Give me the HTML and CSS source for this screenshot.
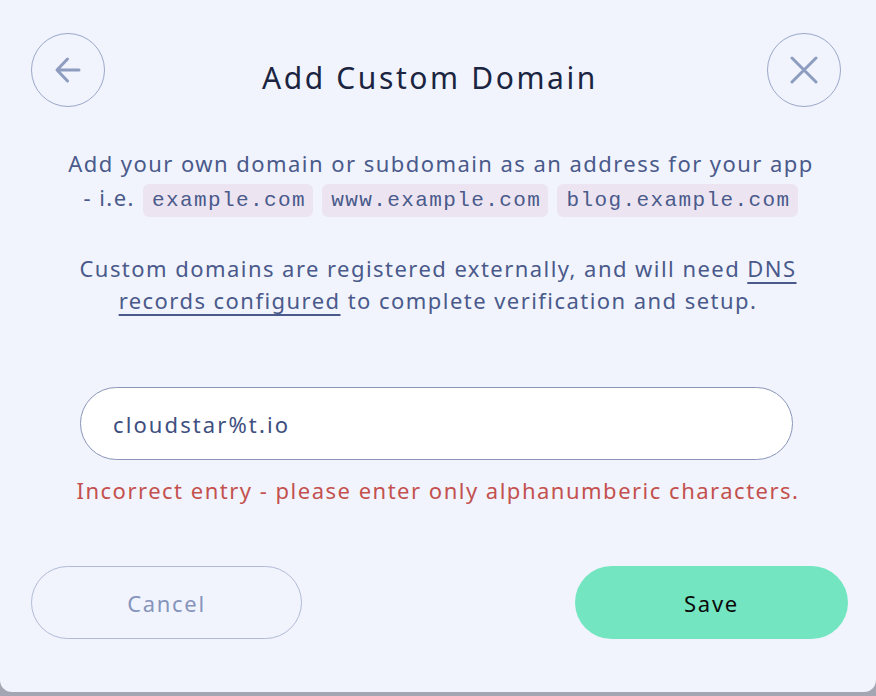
FILE: index.html
```html
<!DOCTYPE html>
<html lang="en">
<head>
<meta charset="utf-8">
<title>Add Custom Domain</title>
<link rel="stylesheet" href="styles.css">
</head>
<body>
<div class="dialog">
  <header class="header">
    <button class="circle-btn" aria-label="Back">
      <svg width="28" height="28" viewBox="0 0 28 28" fill="none" stroke="currentColor" stroke-width="3" stroke-linecap="round" stroke-linejoin="round"><path d="M25 14H3.5M13.5 3L3 14l10.5 11"/></svg>
    </button>
    <h1 class="title">Add Custom Domain</h1>
    <button class="circle-btn" aria-label="Close">
      <svg width="28" height="28" viewBox="0 0 28 28" fill="none" stroke="currentColor" stroke-width="3" stroke-linecap="round"><path d="M2 2l24 24M26 2L2 26"/></svg>
    </button>
  </header>
  <p class="intro">Add your own domain or subdomain as an address for your app<br>- i.e. <code class="chip">example.com</code> <code class="chip">www.example.com</code> <code class="chip">blog.example.com</code></p>
  <p class="note">Custom domains are registered externally, and will need <a href="#" class="link">DNS<br>records configured</a> to complete verification and setup.</p>
  <div class="field">
    <input class="input" type="text" value="cloudstar%t.io">
    <p class="error">Incorrect entry - please enter only alphanumberic characters.</p>
  </div>
  <div class="actions">
    <button class="btn btn-cancel">Cancel</button>
    <button class="btn btn-save">Save</button>
  </div>
</div>
</body>
</html>
```
FILE: styles.css
```css
* { box-sizing: border-box; }
html, body { margin: 0; padding: 0; }
body {
  background: #a4a7b3;
  font-family: "Noto Sans", "Open Sans", sans-serif;
  width: 876px;
  height: 696px;
  overflow: hidden;
}
.dialog {
  width: 876px;
  height: 692px;
  background: #f1f4fd;
  border-radius: 0 0 12px 12px;
  display: flex;
  flex-direction: column;
}
.header {
  display: flex;
  align-items: center;
  justify-content: space-between;
  padding: 33px 35px 0 31px;
}
.circle-btn {
  width: 74px;
  height: 74px;
  border-radius: 50%;
  border: 1.5px solid #9ba8c9;
  background: transparent;
  color: #8e9cc0;
  display: flex;
  align-items: center;
  justify-content: center;
  padding: 0;
}
.title {
  margin: 16px 12px 0 0;
  font-size: 30px;
  font-weight: 400;
  color: #1b2440;
  letter-spacing: 2.6px;
  line-height: 40px;
}
.intro, .note {
  margin: 0;
  text-align: center;
  color: #4a5a8b;
  font-size: 22px;
  letter-spacing: 1.45px;
}
.intro {
  margin-top: 39px;
  padding-left: 6px;
  line-height: 34px;
}
.note {
  margin-top: 34px;
  line-height: 32px;
}
.chip {
  font-family: "Liberation Mono", monospace;
  font-size: 21px;
  letter-spacing: 1.4px;
  background: #ece5f1;
  border-radius: 6px;
  padding: 5px 7px 5px 9px;
  margin: 0 1px;
  color: #4a5a8b;
}
.link {
  color: #4a5a8b;
  text-decoration: underline;
  text-underline-offset: 5px;
  text-decoration-thickness: 1.5px;
}
.field {
  display: flex;
  flex-direction: column;
  align-items: center;
  margin-top: 71px;
}
.input {
  width: 713px;
  height: 73px;
  margin-left: -3px;
  border-radius: 37px;
  border: 1.5px solid #8a96b9;
  background: #ffffff;
  padding: 0 32px;
  font-family: "Noto Sans", sans-serif;
  font-size: 22px;
  letter-spacing: 2.1px;
  color: #3e4f80;
  outline: none;
}
.error {
  margin: 15px 0 0 0;
  color: #c4514e;
  font-size: 22px;
  letter-spacing: 1.5px;
  line-height: 30px;
}
.actions {
  display: flex;
  justify-content: space-between;
  padding: 0 28px 0 31px;
  margin-top: 61px;
}
.btn {
  height: 73px;
  border-radius: 37px;
  font-family: "Noto Sans", sans-serif;
  font-size: 22px;
  letter-spacing: 1.7px;
}
.btn-cancel {
  width: 271px;
  background: transparent;
  border: 1.5px solid #b1bbd6;
  color: #8694bb;
}
.btn-save {
  width: 273px;
  background: #73e6c1;
  border: none;
  color: #0a0a0a;
}
```
